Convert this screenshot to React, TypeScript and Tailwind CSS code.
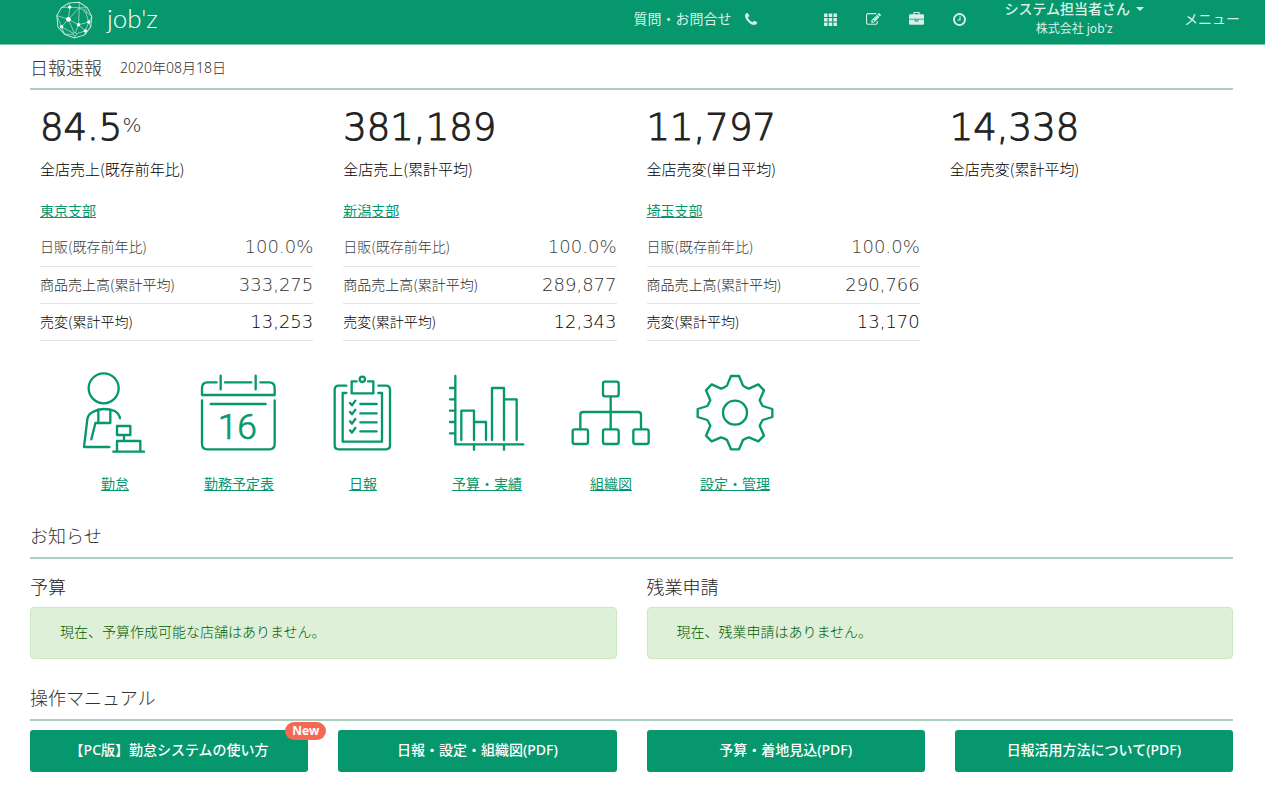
import type { ReactNode } from 'react';

interface Branch {
  name: string;
  rows: Array<{ label: string; value: string; tone: string }>;
}

const GREEN = '#07976d';

const KPIS = [
  { value: '84.5', unit: '%', label: '全店売上(既存前年比)' },
  { value: '381,189', unit: '', label: '全店売上(累計平均)' },
  { value: '11,797', unit: '', label: '全店売変(単日平均)' },
  { value: '14,338', unit: '', label: '全店売変(累計平均)' },
];

function makeBranch(name: string, daily: string, sales: string, change: string): Branch {
  return {
    name,
    rows: [
      { label: '日販(既存前年比)', value: daily, tone: 'text-[#404040]' },
      { label: '商品売上高(累計平均)', value: sales, tone: 'text-[#2c2c2c]' },
      { label: '売変(累計平均)', value: change, tone: 'text-black' },
    ],
  };
}

const BRANCHES = [
  makeBranch('東京支部', '100.0%', '333,275', '13,253'),
  makeBranch('新潟支部', '100.0%', '289,877', '12,343'),
  makeBranch('埼玉支部', '100.0%', '290,766', '13,170'),
];

const NOTICES = [
  { title: '予算', message: '現在、予算作成可能な店舗はありません。' },
  { title: '残業申請', message: '現在、残業申請はありません。' },
];

const MANUALS = [
  { title: '【PC版】勤怠システムの使い方', isNew: true },
  { title: '日報・設定・組織図(PDF)', isNew: false },
  { title: '予算・着地見込(PDF)', isNew: false },
  { title: '日報活用方法について(PDF)', isNew: false },
];

// Small solid toolbar icons, all on a 1792 grid
const NAV_ICONS = [
  {
    label: '一覧',
    path: 'M128 192h416v416h-416zM688 192h416v416h-416zM1248 192h416v416h-416zM128 720h416v416h-416zM688 720h416v416h-416zM1248 720h416v416h-416zM128 1248h416v416h-416zM688 1248h416v416h-416zM1248 1248h416v416h-416z',
  },
  {
    label: '編集',
    path: 'M888 1184l116-116-152-152-116 116v56h96v96h56zm440-720q-16-16-33 1l-350 350q-17 17-1 33t33-1l350-350q17-17 1-33zm80 594v190q0 119-84.5 203.5t-203.5 84.5h-832q-119 0-203.5-84.5t-84.5-203.5v-832q0-119 84.5-203.5t203.5-84.5h832q63 0 117 25 15 7 18 23 3 17-9 29l-49 49q-14 14-32 8-23-6-45-6h-832q-66 0-113 47t-47 113v832q0 66 47 113t113 47h832q66 0 113-47t47-113v-126q0-13 9-22l64-64q15-15 35-7t20 29zm-96-738l288 288-672 672h-288v-288zm444 132l-92 92-288-288 92-92q28-28 68-28t68 28l152 152q28 28 28 68t-28 68z',
  },
  {
    label: '業務',
    path: 'M640 256h512v-128h-512v128zm1152 640v480q0 66-47 113t-113 47h-1472q-66 0-113-47t-47-113v-480h672v160q0 26 19 45t45 19h320q26 0 45-19t19-45v-160h672zm-768 0v128h-256v-128h256zm768-480v384h-1792v-384q0-66 47-113t113-47h352v-160q0-40 28-68t68-28h576q40 0 68 28t28 68v160h352q66 0 113 47t47 113z',
  },
  {
    label: '時刻',
    path: 'M1024 544v448q0 14-9 23t-23 9h-320q-14 0-23-9t-9-23v-64q0-14 9-23t23-9h224v-352q0-14 9-23t23-9h64q14 0 23 9t9 23zm416 352q0-148-73-273t-198-198-273-73-273 73-198 198-73 273 73 273 198 198 273 73 273-73 198-198 73-273zm224 0q0 209-103 385.5t-279.5 279.5-385.5 103-385.5-103-279.5-279.5-103-385.5 103-385.5 279.5-279.5 385.5-103 385.5 103 279.5 279.5 103 385.5z',
  },
];

const PHONE_PATH =
  'M1408 1112q0 27-10 70.5t-21 68.5q-21 50-122 106-94 51-186 51-27 0-52.5-3.5t-57.5-12.5-47.5-14.5-55.5-20.5-49-18q-98-35-175-83-128-79-264.5-215.5t-215.5-264.5q-48-77-83-175-3-9-18-49t-20.5-55.5-14.5-47.5-12.5-57.5-3.5-52.5q0-92 51-186 56-101 106-122 25-11 68.5-21t70.5-10q14 0 21 3 18 6 53 76 11 19 30 54t35 63.5 31 53.5q3 4 17.5 25t21.5 35.5 7 28.5q0 20-28.5 50t-62 55-62 53-28.5 46q0 9 5 22.5t8.5 20.5 14 24 11.5 19q76 137 174 235t235 174q2 1 19 11.5t24 14 20.5 8.5 22.5 5q18 0 46-28.5t53-62 55-62 50-28.5q14 0 28.5 7t35.5 21.5 25 17.5q25 15 53.5 31t63.5 35 54 30q70 35 76 53 3 7 3 21z';

// Line drawings for the main menu
const MENU: Array<{ label: string; viewBox: string; art: ReactNode }> = [
  {
    label: '勤怠',
    viewBox: '30 24 270 270',
    art: (
      <>
        <circle cx="131" cy="85" r="45" />
        <path d="M148 261H72L82 178Q84 163 98 156Q114 147 131 147Q150 147 164 153Q177 160 180 175" />
        <path d="M94 238L106 190M106 189H151V150M115 150V189" />
        <path d="M171 198H211V225H171ZM192 226V242M171 274V243H241V274M160 275H252" />
      </>
    ),
  },
  {
    label: '勤務予定表',
    viewBox: '402 24 270 270',
    art: (
      <>
        <path d="M470 67H442Q426 67 426 84V105H644V84Q644 67 628 67H601M495 67H574M482 47V88M587 47V88" />
        <path d="M426 121V252Q426 268 442 268H628Q644 268 644 252V121M452 132H617" />
        <text
          x="532"
          y="237"
          textAnchor="middle"
          fill={GREEN}
          strokeWidth="2"
          className="font-['Roboto'] text-[106px] font-light"
        >
          16
        </text>
      </>
    ),
  },
  {
    label: '日報',
    viewBox: '24 24 270 270',
    art: (
      <>
        <path d="M109 77H86Q74 77 74 90V256Q74 268 86 268H228Q240 268 240 256V90Q240 77 228 77H205" />
        <path d="M109 99H98V245H216V99H205M140 64H125V100H190V64H174" />
        <circle cx="157" cy="58" r="8" />
        <path d="M151 132H200M151 160H200M151 187H200M151 214H200" />
        <path d="M120 129L126 136L136 122M120 156L126 163L136 149M120 184L126 191L136 177M120 211L126 218L136 204" />
      </>
    ),
  },
  {
    label: '予算・実績',
    viewBox: '396 24 270 270',
    art: (
      <>
        <path d="M436 48V253H640M420 84H435M420 118H435M420 152H435M420 186H435M420 220H435M492 254V269M582 254V269" />
        <path d="M454 240V152H492V240M492 186H528V240M546 240V84H582V240M582 118H620V240" />
      </>
    ),
  },
  {
    label: '組織図',
    viewBox: '48 24 270 270',
    art: (
      <>
        <rect x="159" y="65" width="47" height="44" rx="6" />
        <rect x="68" y="208" width="46" height="44" rx="6" />
        <rect x="159" y="208" width="47" height="44" rx="6" />
        <rect x="250" y="208" width="46" height="44" rx="6" />
        <path d="M182 110V207M91 207V164Q91 156 99 156H265Q273 156 273 164V207" />
      </>
    ),
  },
  {
    label: '設定・管理',
    viewBox: '420 24 270 270',
    art: (
      <>
        <circle cx="555" cy="158" r="36" />
        <path d="M543 48H567L579 77Q588 84 597 86L625 73L642 91L629 121Q633 130 638 138L667 147V171L638 180Q633 188 629 197L642 227L625 244L597 232Q588 234 579 240L567 268H543L531 240Q522 234 513 232L485 244L468 227L481 197Q477 188 472 180L443 171V147L472 138Q477 130 481 121L468 91L485 73L513 86Q522 84 531 77Z" />
      </>
    ),
  },
];

function SphereLogo() {
  return (
    <svg className="h-[38px] w-[37px]" viewBox="0 0 108 112" fill="none" stroke="#c4e8da" strokeWidth="2" aria-hidden="true">
      <path d="M38 6L68 4L92 20L105 46L102 76L84 100L54 109L25 98L5 76L2 43L15 20Z" strokeWidth="3" />
      <path d="M38 6L40 18L68 20L92 20M68 4L68 20L86 30L105 46M15 20L40 18L36 54L2 43M36 54L68 20L66 70L36 54L16 76L2 43M36 54L55 98L66 70L96 62L86 30M66 70L86 88L96 62L102 76M16 76L55 98L86 88M16 76L25 98L55 98L54 109M96 62L105 46M84 100L86 88" />
      <g fill="#fff" stroke="none">
        <circle cx="40" cy="18" r="5" />
        <circle cx="36" cy="54" r="7" />
        <circle cx="66" cy="70" r="5" />
        <circle cx="96" cy="62" r="5" />
        <circle cx="86" cy="88" r="5" />
        <circle cx="16" cy="76" r="5" />
      </g>
      <circle cx="86" cy="30" r="4" fill={GREEN} />
      <circle cx="55" cy="98" r="5" fill={GREEN} />
    </svg>
  );
}

function Header() {
  return (
    <header className="flex h-[45px] items-center border-b border-[#7cc4ab] bg-[#07976d] pr-[25px] pl-14 text-sm font-normal text-[#d8f0e7]">
      <a href="#" className="flex h-full items-start gap-[14px] text-white">
        <span className="pt-px">
          <SphereLogo />
        </span>
        <span className="pt-[2px] font-['Lato'] text-[26px] leading-8 font-light">job'z</span>
      </a>
      <nav className="mb-[6px] ml-auto flex items-center">
        <a href="#" className="flex items-center gap-[14px]">
          質問・お問合せ
          <svg className="h-3 w-3" viewBox="0 0 1408 1408" fill="currentColor" aria-hidden="true">
            <path d={PHONE_PATH} />
          </svg>
        </a>
        <div className="ml-[52px] flex">
          {NAV_ICONS.map((icon) => (
            <button key={icon.label} aria-label={icon.label} className="flex w-[43px] justify-center">
              <svg className="h-[15px] w-[15px]" viewBox="0 0 1792 1792" fill="currentColor" aria-hidden="true">
                <path d={icon.path} />
              </svg>
            </button>
          ))}
        </div>
        <button className="ml-[23px] flex flex-col items-center">
          <span className="flex items-center gap-[6px] leading-5 font-medium">
            システム担当者さん
            <span className="border-x-4 border-t-4 border-x-transparent border-t-current" />
          </span>
          <span className="text-xs leading-5">株式会社 job'z</span>
        </button>
        <button className="ml-10">メニュー</button>
      </nav>
    </header>
  );
}

function SectionTitle({ children }: { children: ReactNode }) {
  return (
    <div className="flex h-[45px] items-center gap-[18px] border-b-2 border-[#a9cfc0] pt-[2px] text-[#333]">
      {children}
    </div>
  );
}

function BranchTable({ branch }: { branch: Branch }) {
  return (
    <div>
      <a href="#" className="block text-sm leading-5 font-normal text-[#07976d] underline">
        {branch.name}
      </a>
      <table className="mt-2 w-full">
        <tbody>
          {branch.rows.map((row) => (
            <tr key={row.label} className={`h-[37px] border-b border-[#dfe7e5] ${row.tone}`}>
              <th scope="row" className="pb-[2px] text-left font-['Noto_Sans_CJK_JP',sans-serif] text-sm font-light">
                {row.label}
              </th>
              <td className="text-right font-['DejaVu_Sans',sans-serif] text-lg leading-6 font-light">
                {row.value}
              </td>
            </tr>
          ))}
        </tbody>
      </table>
    </div>
  );
}

export default function App() {
  return (
    <div className="bg-white font-['Noto_Sans','Noto_Sans_CJK_JP',sans-serif] font-light text-[#333]">
      <Header />
      <main className="pr-8 pb-7 pl-[30px]">
        <SectionTitle>
          <h1 className="text-lg">日報速報</h1>
          <span className="text-sm">2020年08月18日</span>
        </SectionTitle>

        <section className="grid grid-cols-4 gap-x-[30px] px-[10px] pt-[14px]">
          {KPIS.map((kpi) => (
            <div key={kpi.label}>
              <p className="flex items-start font-['DejaVu_Sans',sans-serif] text-[37px] leading-[48px] text-[#222]">
                <span className="[-webkit-text-stroke:1px]">{kpi.value}</span>
                {kpi.unit && <span className="text-xl leading-[42px]">{kpi.unit}</span>}
              </p>
              <p className="pt-[5px] font-['Noto_Sans_CJK_JP',sans-serif] text-[15px] leading-6 text-black">
                {kpi.label}
              </p>
            </div>
          ))}
        </section>

        <section className="grid grid-cols-4 gap-x-[30px] px-[10px] pt-5">
          {BRANCHES.map((branch) => (
            <BranchTable key={branch.name} branch={branch} />
          ))}
        </section>

        <nav className="flex pt-[27px] pl-[23px]">
          {MENU.map((item) => (
            <a key={item.label} href="#" className="flex w-[124px] flex-col items-center gap-4 text-[#07976d]">
              <svg
                className="h-[90px] w-[90px]"
                viewBox={item.viewBox}
                fill="none"
                stroke={GREEN}
                strokeWidth="7"
                strokeLinecap="round"
                strokeLinejoin="round"
                aria-hidden="true"
              >
                {item.art}
              </svg>
              <span className="text-sm leading-5 font-normal underline">{item.label}</span>
            </a>
          ))}
        </nav>

        <div className="pt-5">
          <SectionTitle>
            <h2 className="text-lg">お知らせ</h2>
          </SectionTitle>
        </div>
        <section className="grid grid-cols-2 gap-x-[30px] pt-3">
          {NOTICES.map((notice) => (
            <div key={notice.title}>
              <h3 className="text-lg leading-8 text-[#222]">{notice.title}</h3>
              <p className="mt-1 rounded border border-[#d0e6c2] bg-[#dff0d8] px-[29px] pt-[14px] pb-4 text-sm leading-5 text-[#005c00]">
                {notice.message}
              </p>
            </div>
          ))}
        </section>

        <div className="pt-[17px]">
          <SectionTitle>
            <h2 className="text-lg">操作マニュアル</h2>
          </SectionTitle>
        </div>
        <section className="grid grid-cols-4 gap-x-[30px] pt-[9px]">
          {MANUALS.map((manual) => (
            <a
              key={manual.title}
              href="#"
              className="relative flex h-[42px] items-center justify-center rounded-[3px] bg-[#07976d] pb-px text-sm font-medium text-white"
            >
              {manual.title}
              {manual.isNew && (
                <span className="absolute -top-2 -right-[18px] rounded-full bg-[#f56954] px-[7px] text-xs leading-[18px] font-bold">
                  New
                </span>
              )}
            </a>
          ))}
        </section>
      </main>
    </div>
  );
}
